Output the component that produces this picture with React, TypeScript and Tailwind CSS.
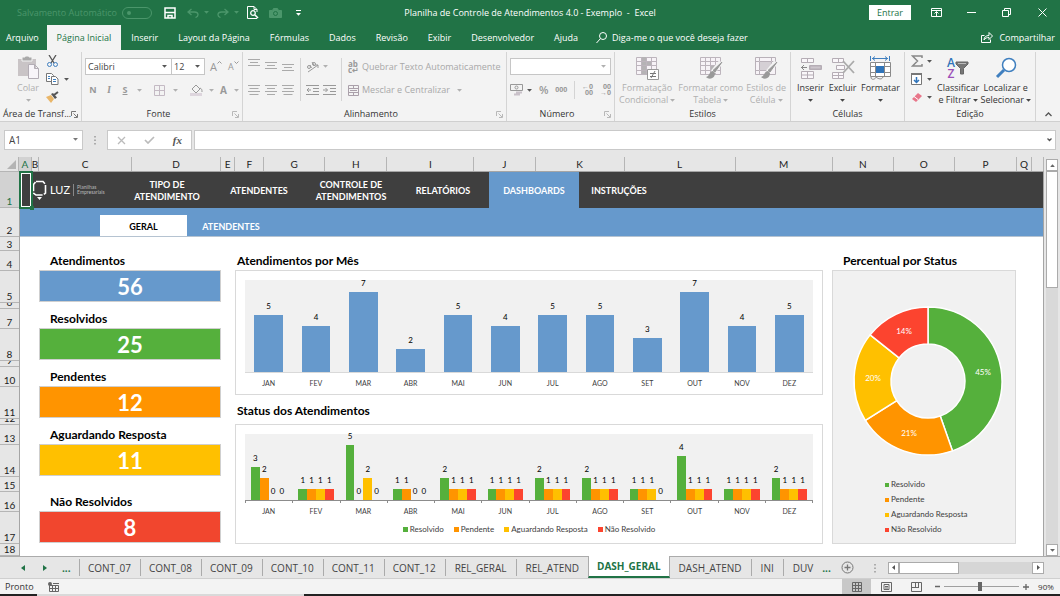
import React from 'react';
import clsx from 'clsx';


type Status = {
    name: string;
    color: string;
    fill: string;
}

const RIBBON_TABS = [ 'Arquivo', 'Página Inicial', 'Inserir', 'Layout da Página', 'Fórmulas', 'Dados', 'Revisão', 'Exibir', 'Desenvolvedor', 'Ajuda' ];
const COLUMNS = [ 'A', 'B', 'C', 'D', 'E', 'F', 'G', 'H', 'I', 'J', 'K', 'L', 'M', 'N', 'O', 'P', 'Q', '' ];
const ROW_HEIGHTS = [ 36, 29, 14, 20, 32, 6, 20, 32, 6, 20, 32, 6, 20, 32, 15, 20, 32, 12 ];
const SHEETS = [ 'CONT_07', 'CONT_08', 'CONT_09', 'CONT_10', 'CONT_11', 'CONT_12', 'REL_GERAL', 'REL_ATEND', 'DASH_GERAL', 'DASH_ATEND', 'INI', 'DUV' ];
const MONTHS = [ 'JAN', 'FEV', 'MAR', 'ABR', 'MAI', 'JUN', 'JUL', 'AGO', 'SET', 'OUT', 'NOV', 'DEZ' ];
const TOTALS = [ 5, 4, 7, 2, 5, 4, 5, 5, 3, 7, 4, 5 ];

const BY_STATUS = [
    [ 3, 2, 0, 0 ], [ 1, 1, 1, 1 ], [ 5, 0, 2, 0 ], [ 1, 1, 0, 0 ],
    [ 2, 1, 1, 1 ], [ 1, 1, 1, 1 ], [ 2, 1, 1, 1 ], [ 2, 1, 1, 1 ],
    [ 1, 1, 1, 0 ], [ 4, 1, 1, 1 ], [ 1, 1, 1, 1 ], [ 2, 1, 1, 1 ],
];

const STATUSES: Status[] = [
    { name: 'Resolvido', color: 'bg-[#55b03c]', fill: '#55b03c' },
    { name: 'Pendente', color: 'bg-[#ff9400]', fill: '#ff9400' },
    { name: 'Aguardando Resposta', color: 'bg-[#ffc000]', fill: '#ffc000' },
    { name: 'Não Resolvido', color: 'bg-[#fc442f]', fill: '#fc442f' },
];

const KPIS = [
    { label: 'Atendimentos', value: 56, color: 'bg-[#6699cc]' },
    { label: 'Resolvidos', value: 25, color: 'bg-[#55b03c]' },
    { label: 'Pendentes', value: 12, color: 'bg-[#ff9400]' },
    { label: 'Aguardando Resposta', value: 11, color: 'bg-[#ffc000]' },
    { label: 'Não Resolvidos', value: 8, color: 'bg-[#f1462e]' },
];


/* ---------- small pieces ---------- */

type IconProps = {
    w: number;
    h: number;
    className?: string;
    children: React.ReactNode;
}

function Icon({ w, h, className, children }: IconProps) {
    return <svg width={w} height={h} viewBox={`0 0 ${w} ${h}`} fill="none" stroke="currentColor" className={clsx('shrink-0', className)} aria-hidden="true">{children}</svg>;
}

function Caret({ className = 'text-[#555]' }: { className?: string }) {
    return <Icon w={5} h={3} className={className}><path d="M.5 0h4v.5L2.500 2.800.5.500z" fill="currentColor" stroke="none" /></Icon>;
}

function Divider() {
    return <span className="h-[18px] w-px shrink-0 bg-[#d4d4d4]" />;
}

function Launcher({ dim }: { dim?: boolean }) {
    return <Icon w={7} h={7} className={dim ? 'text-[#b8b8b8]' : 'text-[#777]'}><path d="M.5 5V.5H5M2.500 2.500l3.500 3.500M6.500 3v3.500H3" /></Icon>;
}

function Lines({ widths }: { widths: number[] }) {
    return <Icon w={12} h={10} className="text-[#aaa]">
        {widths.map((w, i) => <path key={i} d={`M${(12 - w) / 2} ${i * 3 + .5}h${w}`} />)}
    </Icon>;
}

function Group({ label, launcher, children }: { label: string; launcher?: 'dim' | 'dark'; children: React.ReactNode }) {
    return <section aria-label={label} className="flex min-w-0 flex-col whitespace-nowrap border-r border-[#d4d4d4]">
        <div className="flex flex-1">{children}</div>
        <div className="flex h-[14px] items-center px-[3px] text-[#333]">
            <span className={clsx('flex-1', label.endsWith('...') ? 'text-left' : 'text-center')}>{label}</span>
            {launcher && <button aria-label={`Opções de ${label}`}><Launcher dim={launcher === 'dim'} /></button>}
        </div>
    </section>;
}

function BigButton({ lines, icon, dim, caretBelow }: { lines: string[]; icon: React.ReactNode; dim?: boolean; caretBelow?: boolean }) {
    return <button className={clsx('flex flex-col items-center leading-3', dim ? 'text-[#b0b0b0]' : 'text-[#333]')}>
        <span className="flex h-[28px] items-center">{icon}</span>
        {lines.map((line, i) => <span key={line} className="flex items-center gap-[2px]">
            {line}{i === 1 && <Caret className={dim ? 'text-[#b0b0b0]' : 'text-[#444]'} />}
        </span>)}
        {caretBelow && <span className="flex h-3 items-center"><Caret className={dim ? 'text-[#b0b0b0]' : 'text-[#444]'} /></span>}
    </button>;
}

function Picker({ label, value, className, dim }: { label: string; value: string; className: string; dim?: boolean }) {
    return <label className={clsx('relative block h-[17px] border border-[#c6c6c6] bg-white', className)}>
        <select aria-label={label} defaultValue={value} className="block h-full w-full appearance-none pl-[2px] text-[#444]">
            <option>{value}</option>
        </select>
        <Caret className={clsx('pointer-events-none absolute right-1 top-[6px]', dim ? 'text-[#b0b0b0]' : 'text-[#555]')} />
    </label>;
}


/* ---------- title bar and ribbon tabs ---------- */

function TitleBar() {
    return <header className="grid h-[25px] grid-cols-[1fr_auto_1fr] items-center">
        <div className="flex items-center pl-[17px] text-[#4b966b]">
            <label className="flex items-center gap-[5px]">
                Salvamento Automático
                <input type="checkbox" disabled className="peer sr-only" />
                <Icon w={30} h={12}><rect x=".5" y=".5" width="29" height="11" rx="5.500" /><circle cx="7" cy="6" r="2" fill="currentColor" stroke="none" /></Icon>
            </label>
            <button aria-label="Salvar" className="ml-3 text-white"><Icon w={12} h={12}><path d="M1 1h10v10H1z" strokeWidth="1.500" /><path d="M1 5.500h10M4 11V8.500h4V11" strokeWidth="1.500" /></Icon></button>
            <button aria-label="Desfazer" className="ml-[11px] flex items-center gap-[5px]"><Icon w={12} h={10}><path d="M4.500 1 1 4l3.500 3M1 4h6.500c4.500 0 4.500 4.500 1 5.500" strokeWidth="1.300" /></Icon><Caret className="text-[#4b966b]" /></button>
            <button aria-label="Refazer" className="ml-2 flex items-center gap-[5px]"><Icon w={12} h={10}><path d="M7.500 1 11 4 7.500 7M11 4H4.500C0 4 0 8.500 3.500 9.500" strokeWidth="1.300" /></Icon><Caret className="text-[#4b966b]" /></button>
            <button aria-label="Visualizar impressão" className="ml-2 text-white"><Icon w={12} h={13}><path d="M10 12.500H.5V.5H7l3 3V6M7 .5v3h3" /><circle cx="6" cy="7" r="2.300" strokeWidth="1.300" /><path d="m8 9 3 3" strokeWidth="1.600" /></Icon></button>
            <button aria-label="Câmera" className="ml-[10px]"><Icon w={13} h={10}><path d="M.5 2.500h3l1-2h4l1 2h3v7H.5z" fill="currentColor" /><circle cx="6.500" cy="5.500" r="2" stroke="#217346" /></Icon></button>
            <button aria-label="Personalizar" className="ml-[14px] flex flex-col items-center gap-[2px] text-white"><span className="h-px w-[5px] bg-white" /><Caret className="text-white" /></button>
        </div>
        <h1>Planilha de Controle de Atendimentos 4.0 - Exemplo&nbsp; -&nbsp; Excel</h1>
        <div className="flex items-center justify-end">
            <button className="h-[15px] w-[42px] bg-white text-[#217346]">Entrar</button>
            <button aria-label="Opções da faixa" className="ml-5"><Icon w={11} h={9}><path d="M.5.500h10v8H.5zM.5 2.500h10M5.500 8V4M3.500 5.500l2-2 2 2" /></Icon></button>
            <button aria-label="Minimizar" className="ml-[25px]"><Icon w={9} h={9}><path d="M0 4.500h9" /></Icon></button>
            <button aria-label="Restaurar" className="ml-[26px]"><Icon w={9} h={9}><path d="M.5 2.500h6v6h-6zM2.500 2.500v-2h6v6h-2" /></Icon></button>
            <button aria-label="Fechar" className="ml-[27px] mr-[13px]"><Icon w={9} h={9}><path d="m.5.500 8 8m0-8-8 8" /></Icon></button>
        </div>
    </header>;
}

function RibbonTabs() {
    return <nav aria-label="Faixa de opções" className="flex h-[25px] items-stretch whitespace-nowrap">
        {RIBBON_TABS.map((tab) => <button
            key={tab}
            className={clsx(
                tab === 'Arquivo' ? 'pl-[6px] pr-2' : 'px-[10px]',
                tab === 'Página Inicial' && 'bg-[#f3f3f3] text-[#217346]',
            )}>{tab}</button>)}
        <button className="flex items-center gap-[5px] pl-2">
            <Icon w={11} h={12}><circle cx="7" cy="4" r="3.500" /><path d="M4.500 6.500.5 11" /></Icon>
            Diga-me o que você deseja fazer
        </button>
        <button className="ml-auto flex items-center gap-[6px] pr-[5px]">
            <Icon w={12} h={11}><path d="M3.500 3.500h-3v7h9v-3M3 8c0-3 2-4.500 5-4.500v-3L11.500 4 8 7.500v-2c-2 0-4 .5-5 2.500z" /></Icon>
            Compartilhar
        </button>
    </nav>;
}


/* ---------- ribbon ---------- */

function ClipboardGroup() {
    return <Group label="Área de Transf..." launcher="dark">
        <div className="flex pl-4 pt-[2px]">
            <BigButton dim caretBelow lines={[ 'Colar' ]} icon={<Icon w={24} h={24}>
                <path d="M2 3h18v17H2z" fill="#c9c4c6" stroke="none" /><path d="M6 1h3V0h4v1h3v4H6z" fill="#a9a9a9" stroke="#f3f3f3" />
                <path d="M12.500 8.500h6l4 4v10h-10zM18.500 8.500v4h4" fill="#f8f5f9" stroke="#b3adb5" />
            </Icon>} />
        </div>
        <div className="ml-[6px] flex flex-col">
            <button aria-label="Recortar" className="flex h-[18px] items-center"><Icon w={13} h={13}><path d="M3 0l5 8M10 0 5 8" stroke="#555" strokeWidth="1.300" /><circle cx="3.500" cy="9.500" r="2" stroke="#3f7fbf" /><circle cx="9.500" cy="9.500" r="2" stroke="#3f7fbf" /></Icon></button>
            <button aria-label="Copiar" className="flex h-[18px] items-center gap-[5px]"><Icon w={13} h={12}><path d="M.5.500h5l2 2v6h-7z" fill="#fff" stroke="#777" /><path d="M5.500 3.500h4l2.500 2.500v5.500H5.500z" fill="#fff" stroke="#777" /><path d="M2 3.500h2M2 5.500h2M7 6.500h3M7 8.500h3" stroke="#3f7fbf" /></Icon><Caret /></button>
            <button aria-label="Pincel de formatação" className="flex h-[18px] items-center"><Icon w={13} h={12}><path d="M0 6 5 4l3 4-3 4z" fill="#e9b669" stroke="none" /><path d="m5 3 4 5 2-1.500L7 2z" fill="#555" stroke="none" /><path d="m8 4 4-3" stroke="#555" strokeWidth="2" /></Icon></button>
        </div>
    </Group>;
}

function FontGroup() {
    return <Group label="Fonte" launcher="dim">
        <div className="flex flex-1 flex-col gap-[6px] pl-[3px] pt-[6px] text-[#999]">
            <div className="flex h-[17px] items-center">
                <Picker label="Fonte" value="Calibri" className="w-[87px]" />
                <Picker label="Tamanho da fonte" value="12" className="w-[33px] border-l-0" />
                <button aria-label="Aumentar fonte" className="ml-[5px] flex items-start text-[11px]">A<Icon w={5} h={3}><path d="m.5 2.500 2-2 2 2" /></Icon></button>
                <button aria-label="Diminuir fonte" className="ml-[6px] flex items-start">A<Icon w={5} h={3}><path d="m.5.500 2 2 2-2" /></Icon></button>
            </div>
            <div className="flex h-[18px] items-center">
                <button className="w-4 font-bold">N</button>
                <button className="w-4 font-serif text-[10px] font-bold italic">I</button>
                <button className="w-4 font-bold underline">S</button>
                <Caret className="ml-1 text-[#b0b0b0]" />
                <span className="ml-[6px]"><Divider /></span>
                <button aria-label="Bordas" className="ml-[6px] flex items-center gap-2"><Icon w={11} h={11} className="text-[#c4bac4]"><path d="M.5.500h10v10H.5zM5.500 0v11M0 5.500h11" /></Icon><Caret className="text-[#b0b0b0]" /></button>
                <span className="ml-[6px]"><Divider /></span>
                <button aria-label="Cor de preenchimento" className="ml-[6px] flex items-center gap-[6px]"><Icon w={13} h={12}><path d="m2 5 4-4 4 4-4 4zM10 4c2 1 2 2 2 4" /><path d="M0 10.500h12" stroke="#ddd5dd" strokeWidth="3" /></Icon><Caret className="text-[#b0b0b0]" /></button>
                <button aria-label="Cor da fonte" className="ml-[6px] flex items-center gap-[7px] text-[10px] font-bold">A<Caret className="text-[#b0b0b0]" /></button>
            </div>
        </div>
    </Group>;
}

function AlignGroup() {
    return <Group label="Alinhamento" launcher="dim">
        <div className="flex flex-col gap-[6px] pl-[5px] pt-[6px]">
            <div className="flex h-[17px] items-center gap-[5px]">
                <button aria-label="Alinhar em cima" className="pb-[6px]"><Lines widths={[ 12, 8, 12 ]} /></button>
                <button aria-label="Alinhar no meio"><Lines widths={[ 12, 8, 12 ]} /></button>
                <button aria-label="Alinhar embaixo" className="pt-[5px]"><Lines widths={[ 12, 8, 12 ]} /></button>
            </div>
            <div className="flex h-[18px] items-center gap-[5px]">
                <button aria-label="Alinhar à esquerda"><Lines widths={[ 12, 9, 12, 9 ]} /></button>
                <button aria-label="Centralizar"><Lines widths={[ 12, 8, 12, 8 ]} /></button>
                <button aria-label="Alinhar à direita"><Lines widths={[ 12, 9, 12, 9 ]} /></button>
            </div>
        </div>
        <div className="ml-[6px] mt-[6px] h-[43px] w-px bg-[#d4d4d4]" />
        <div className="flex flex-col gap-[6px] pl-[5px] pt-[6px] text-[#999]">
            <button aria-label="Orientação" className="flex h-[17px] items-center gap-1"><Icon w={13} h={12}><circle cx="3" cy="6" r="1.500" /><path d="m4 4 1.500 3M6 1l2.500 4M2 11l10-7M9 4h3v3" /><circle cx="8" cy="3" r="1.500" /></Icon><Caret className="text-[#b0b0b0]" /></button>
            <div className="flex h-[18px] items-center gap-1">
                <button aria-label="Diminuir recuo"><Icon w={13} h={10}><path d="M0 .5h13M7 3.500h6M7 6.500h6M0 9.500h13M5 5H1m2-2L1 5l2 2" /></Icon></button>
                <button aria-label="Aumentar recuo"><Icon w={13} h={10}><path d="M0 .5h13M7 3.500h6M7 6.500h6M0 9.500h13M0 5h4.500m-2-2 2 2-2 2" /></Icon></button>
            </div>
        </div>
        <div className="ml-[5px] mt-[6px] h-[43px] w-px bg-[#d4d4d4]" />
        <div className="flex flex-col gap-[6px] pl-[6px] pt-[6px] text-[#a8a8a8]">
            <button className="flex h-[17px] items-center gap-[3px]">
                <span className="flex w-[11px] flex-col items-start text-[8px] font-bold leading-[6px] text-[#999]"><span>ab</span><span>c↵</span></span>
                Quebrar Texto Automaticamente
            </button>
            <button className="flex h-[18px] items-center gap-[3px]">
                <Icon w={11} h={11} className="text-[#aaa0aa]"><path d="M.5.500h10v10H.5zM0 3.500h11M0 7.500h11M5.500 0v3M5.500 8v3M2 5.500h7" /></Icon>
                Mesclar e Centralizar
                <Caret className="ml-1 text-[#b0b0b0]" />
            </button>
        </div>
    </Group>;
}

function NumberGroup() {
    return <Group label="Número" launcher="dim">
        <div className="flex flex-1 flex-col gap-[6px] px-[3px] pt-[6px] text-[#999]">
            <Picker label="Formato de número" value="" className="w-full" dim />
            <div className="flex h-[18px] items-center justify-between">
                <button aria-label="Moeda" className="flex items-center gap-1"><Icon w={13} h={12}><path d="M.5.500h12v6H.5z" /><circle cx="6.500" cy="3.500" r="1.500" /><path d="M6 8.500h6M4 10.500h6" stroke="#c9c1c9" strokeWidth="2" /></Icon><Caret /></button>
                <button className="text-[11px] font-semibold">%</button>
                <button className="text-[7px] font-bold">000</button>
                <Divider />
                <button aria-label="Aumentar casas" className="flex flex-col items-end text-[7px] font-bold leading-[6px]"><span>←0</span><span>00</span></button>
                <button aria-label="Diminuir casas" className="flex flex-col items-end text-[7px] font-bold leading-[6px]"><span>00</span><span>→0</span></button>
            </div>
        </div>
    </Group>;
}

function Grid({ children, shade }: { children?: React.ReactNode; shade?: string }) {
    return <Icon w={24} h={24} className="text-[#bdb5bd]">
        <path d="M1.500 1.500h20v17h-20z" fill="#f7f3f7" />
        {shade && <path d={shade} fill="#b5b3b5" stroke="none" />}
        <path d="M6.500 1v17M11.500 1v17M16.500 1v17M1 5.500h20M1 9.500h20M1 14.500h20" />
        {children}
    </Icon>;
}

function Brush() {
    return <><path d="m22 6-8 10" stroke="#f3f3f3" strokeWidth="5" /><path d="m23 6-7 10-2-1.500z" fill="#999" stroke="#999" /><path d="M14 15c-4 0-3 5-7 6 3 3 9 2 9-4z" fill="#999" stroke="none" /></>;
}

function StylesGroup() {
    return <Group label="Estilos">
        <div className="flex flex-1 justify-between pl-1 pr-1 pt-[2px]">
            <BigButton dim lines={[ 'Formatação', 'Condicional' ]} icon={<Grid shade="M6 1h6v4h4v5h-5v4h4v4H6z"><path d="M12.500 13.500h11v10h-11z" fill="#fff" stroke="#999" /><path d="M15 17.500h6M15 20.500h6M20 15l-4 7" stroke="#777" /></Grid>} />
            <BigButton dim lines={[ 'Formatar como', 'Tabela' ]} icon={<Grid shade="M11 10h5v4h-5z"><Brush /></Grid>} />
            <BigButton dim lines={[ 'Estilos de', 'Célula' ]} icon={<Icon w={24} h={24} className="text-[#b9b1b9]"><path d="M1.500 1.500h20v17h-20zM5.500 5.500h12v9h-12zM5.500 1v4M17.500 1v4M1 5.500h4M1 14.500h4M5.500 15v4M18 5.500h4" fill="#f7f3f7" /><path d="M6 6h11v8H6z" fill="#d5d0d5" stroke="none" /><Brush /></Icon>} />
        </div>
    </Group>;
}

function CellsGroup() {
    return <Group label="Células">
        <div className="flex flex-1 justify-between pl-[6px] pr-1 pt-[2px]">
            <BigButton caretBelow lines={[ 'Inserir' ]} icon={<Icon w={22} h={24} className="text-[#b5adb5]"><path d="M1.500 2.500h12v4h-12zM7.500 2.500v4M9.500 9.500h12v4h-12zM15.500 9.500v4M1.500 15.500h12v7h-12zM7.500 15v8M1 19h12" fill="#faf7fa" /><path d="M10 10h11v3H10z" fill="#ccc5cc" /><path d="M1 11.500h6M4 9l-2.500 2.500L4 14" stroke="#888" /></Icon>} />
            <BigButton caretBelow lines={[ 'Excluir' ]} icon={<Icon w={24} h={24} className="text-[#b5adb5]"><path d="M1.500 2.500h11v4h-11zM7.500 2.500v4M5.500 9.500h8v4h-8zM1.500 16.500h11v6h-11zM7.500 16v7M1 19.500h11" fill="#faf7fa" /><path d="m12 5 11 12M23 5 12 17" stroke="#aaa" strokeWidth="1.800" /></Icon>} />
            <BigButton caretBelow lines={[ 'Formatar' ]} icon={<Icon w={24} h={24} className="text-[#8a8a8a]"><path d="M1.500 0v5M20.500 0v5M3 2.500h16M6 .5 3.500 2.500 6 4.500M16 .5l2.500 2-2.500 2" stroke="#3f7fbf" /><path d="M1.500 6.500h20v14h-20zM6.500 6v15M15.500 6v15M1 10.500h21M1 16.500h21" fill="#fff" /><path d="M7 10h8v7H7z" fill="#2f74ba" stroke="none" /><path d="M2 21c0 4 5 2 5 0 2 2 6 3 7 0" /></Icon>} />
        </div>
    </Group>;
}

function EditGroup() {
    return <Group label="Edição">
        <div className="flex flex-col pl-[6px]">
            <button aria-label="AutoSoma" className="flex h-[18px] items-center gap-1"><Icon w={12} h={12} className="text-[#888]"><path d="M11 3V1H1.500l5 5-5 5H11V9" strokeWidth="1.500" /></Icon><Caret /></button>
            <button aria-label="Preencher" className="flex h-[18px] items-center gap-1"><Icon w={12} h={12}><path d="M.5.500h10v11H.5z" fill="#fff" stroke="#777" /><path d="M0 1h11" stroke="#777" strokeWidth="2" /><path d="M5.500 4v6M3 7l2.500 2.500L8 7" stroke="#2f74ba" strokeWidth="1.500" /></Icon><Caret /></button>
            <button aria-label="Limpar" className="flex h-[18px] items-center gap-1"><Icon w={12} h={12}><path d="m1 8 6-6 4 3-6 6z" fill="#e8768a" stroke="none" /><path d="m3 5.500 4 3" stroke="#fff" /></Icon><Caret /></button>
        </div>
        <div className="flex flex-1 justify-between pl-[5px] pr-1 pt-[2px]">
            <BigButton lines={[ 'Classificar', 'e Filtrar' ]} icon={<span className="flex items-center"><span className="flex flex-col text-[12px] font-semibold leading-[11px]"><span className="text-[#2f74ba]">A</span><span className="text-[#9b4fb8]">Z</span></span><Icon w={14} h={14}><path d="M1 1h12v2L8.500 7.500V13h-3V7.500L1 3z" fill="#777" stroke="#666" /><path d="M3 2.500h8" stroke="#bbb" /></Icon></span>} />
            <BigButton lines={[ 'Localizar e', 'Selecionar' ]} icon={<Icon w={22} h={22} className="text-[#3f7fbf]"><circle cx="14" cy="8" r="6.500" fill="#fff" strokeWidth="1.500" /><path d="m9 13-7 7" strokeWidth="3" /></Icon>} />
        </div>
    </Group>;
}

function Ribbon() {
    return <div className="grid h-[72px] shrink-0 grid-cols-[82fr_161fr_264fr_108fr_176fr_114fr_131fr_24fr] border-b border-[#cfcfcf] bg-[#f3f3f3] pt-[2px]">
        <ClipboardGroup />
        <FontGroup />
        <AlignGroup />
        <NumberGroup />
        <StylesGroup />
        <CellsGroup />
        <EditGroup />
        <button aria-label="Recolher faixa" className="flex items-end justify-center pb-1 text-[#555]"><Icon w={7} h={5}><path d="m.5 4 3-3 3 3" strokeWidth="1.300" /></Icon></button>
    </div>;
}

function FormulaBar() {
    return <div className="flex h-[35px] shrink-0 items-start pl-[4px] pr-1 pt-2 text-[#444]">
        <label className="relative flex h-[20px] w-[79px] border border-[#c9c9c9] bg-white">
            <input aria-label="Caixa de nome" defaultValue="A1" className="w-full pl-1 text-[10px]" />
            <Caret className="absolute right-1 top-[7px] text-[#777]" />
        </label>
        <Icon w={2} h={20} className="mx-[11px] text-[#999]"><path d="M1 6v1.500M1 9.500V11M1 13v1.500" strokeWidth="1.500" /></Icon>
        <div className="flex h-[20px] w-[85px] items-center justify-around border border-[#c9c9c9] bg-white text-[#bbb]">
            <button aria-label="Cancelar"><Icon w={9} h={9}><path d="m1 1 7 7m0-7L1 8" strokeWidth="1.300" /></Icon></button>
            <button aria-label="Inserir"><Icon w={11} h={8}><path d="m1 4 3 3 6-6" strokeWidth="1.700" /></Icon></button>
            <button className="font-['Liberation_Serif',serif] text-[11px] font-bold italic text-[#555]">fx</button>
        </div>
        <label className="relative ml-[2px] flex h-[20px] flex-1 border border-[#c9c9c9] bg-white">
            <input aria-label="Barra de fórmulas" className="w-full px-1" />
            <Icon w={5} h={4} className="absolute right-[3px] top-[7px] text-[#555]"><path d="m.5.500 2 2 2-2" strokeWidth="1.300" /></Icon>
        </label>
    </div>;
}


/* ---------- worksheet ---------- */

function ColumnHeads() {
    return <div className="grid h-[15px] flex-1 grid-cols-[13fr_7fr_93fr_89fr_14fr_29fr_61fr_62fr_87fr_61fr_89fr_111fr_97fr_61fr_61fr_62fr_15fr_12fr] border-b border-[#a5a5a5]">
        {COLUMNS.map((col, i) => <span
            key={i}
            className={clsx('flex min-w-0 items-center justify-center border-r border-[#b5b5b5] text-[10px]', i === 0 ? 'bg-[#d2d2d2] text-[#217346]' : 'text-[#222]')}>{col}</span>)}
    </div>;
}

function RowHeads() {
    return <div className="w-5 shrink-0 border-r border-[#a5a5a5]">
        {ROW_HEIGHTS.map((height, i) => <div
            key={i}
            style={{ height }}
            className={clsx('flex items-end justify-center overflow-hidden border-b border-[#b5b5b5] text-[10px] leading-3', i === 0 ? 'bg-[#d2d2d2] text-[#217346]' : 'text-[#222]')}>{i + 1}</div>)}
    </div>;
}

function Logo() {
    return <div className="flex w-[101px] items-center gap-[3px] pl-3 font-normal">
        <Icon w={15} h={20}><path d="M4 1.500h7l2.500 3v8.500l-2.500 2H4L1.500 13V4.500z" strokeWidth="1.600" strokeDasharray="10 1.500" /><path d="M5 17h5l-2.500 3z" fill="currentColor" stroke="none" /></Icon>
        <span className="text-[11px]">LUZ</span>
        <span className="h-3 w-px bg-[#888]" />
        <span className="text-[5px] leading-[5px] text-[#bbb]">Planilhas<br />Empresariais</span>
    </div>;
}

function SheetNav() {
    const cell = 'flex h-full w-[92px] items-center justify-center pt-[2px] text-center';

    return <nav aria-label="Planilha" className="text-[9px] font-bold leading-3 text-white">
        <div className="relative flex h-[36px] items-center bg-[#3f3f3f]">
            <Logo />
            <a href="#tipo" className={cell}>TIPO DE<br />ATENDIMENTO</a>
            <a href="#atendentes" className={cell}>ATENDENTES</a>
            <a href="#controle" className={cell}>CONTROLE DE<br />ATENDIMENTOS</a>
            <a href="#relatorios" className={cell}>RELATÓRIOS</a>
            <a href="#dashboards" className="flex h-full w-[90px] items-center justify-center bg-[#6699cc] pt-[2px]">DASHBOARDS</a>
            <a href="#instrucoes" className="flex h-full w-[80px] items-center justify-center pt-[2px]">INSTRUÇÕES</a>
            {/* selected cell A1 */}
            <span className="absolute -left-px -top-px h-[38px] w-[14px] border-2 border-[#217346] outline outline-1 -outline-offset-3 outline-white" />
            <span className="absolute -bottom-[2px] left-[10px] size-1 bg-[#217346]" />
        </div>
        <div className="flex h-[29px] items-end border-b border-[#b5c3d1] bg-[#6699cc] pl-[80px]">
            <a href="#geral" className="flex h-[21px] w-[87px] items-center justify-center bg-white pt-[3px] text-black">GERAL</a>
            <a href="#atend" className="flex h-[21px] w-[88px] items-center justify-center pt-[3px]">ATENDENTES</a>
        </div>
    </nav>;
}

function Kpis() {
    return <div className="w-[182px] shrink-0">
        {KPIS.map(({ label, value, color }) => <div key={label} className="mb-[6px] last:mt-[15px]">
            <h2 className="h-5 pl-[11px] text-[12px] font-bold leading-[22px]">{label}</h2>
            <p className={clsx('flex h-8 items-center justify-center border border-[#cfcfcf] pt-[2px] text-[22px] font-bold text-white', color)}>{value}</p>
        </div>)}
    </div>;
}

function Months({ className }: { className: string }) {
    return <div className={clsx('grid grid-cols-12 text-center text-[7px] text-[#404040]', className)}>
        {MONTHS.map((month) => <span key={month}>{month}</span>)}
    </div>;
}

function TotalsChart() {
    return <figure className="h-[125px] border border-[#d9d9d9] px-[9px] pt-[9px]">
        <div className="grid h-[93px] grid-cols-12 border-b border-[#d9d9d9] bg-[#f1f1f1]">
            {TOTALS.map((total, i) => <div key={MONTHS[i]} className="flex h-full flex-col items-center justify-end text-[8px] leading-[10px]">
                <span className="mb-1">{total}</span>
                <div className="w-3/5 shrink-0 bg-[#6699cc]" style={{ height: `${total * 12.5}%` }} />
            </div>)}
        </div>
        <Months className="leading-5" />
    </figure>;
}

function StatusChart() {
    return <figure className="h-[120px] border border-[#d9d9d9] px-[9px] pt-[9px]">
        <div className="grid h-[67px] grid-cols-12 border-b border-[#8c8c8c] bg-[#f1f1f1]">
            {BY_STATUS.map((values, i) => <div key={MONTHS[i]} className="flex h-full px-[6px]">
                {values.map((value, s) => <div key={s} className="flex h-full flex-1 flex-col items-center justify-end text-[8px] leading-[10px]">
                    <span className="mb-1">{value}</span>
                    <div className={clsx('w-full shrink-0', STATUSES[s].color)} style={{ height: `${value * 100 / 6}%` }} />
                </div>)}
            </div>)}
        </div>
        <div className="grid h-[2px] grid-cols-12 border-l border-[#8c8c8c]">
            {MONTHS.map((month) => <span key={month} className="border-r border-[#8c8c8c]" />)}
        </div>
        <Months className="leading-4" />
        <figcaption className="flex justify-center gap-[10px] pt-1 text-[8px] leading-3 text-[#404040]">
            {STATUSES.map(({ name, color }) => <span key={name} className="flex items-center gap-[2px]"><span className={clsx('size-[5px]', color)} />{name}</span>)}
        </figcaption>
    </figure>;
}

function slice(from: number, to: number) {
    const at = (share: number, r: number) => {
        const angle = share * 2 * Math.PI;
        return `${95 + r * Math.sin(angle)} ${110 - r * Math.cos(angle)}`;
    };

    return `M${at(from, 74)}A74 74 0 0 1 ${at(to, 74)}L${at(to, 37)}A37 37 0 0 0 ${at(from, 37)}Z`;
}

function Donut() {
    const labels = [
        { text: '45%', x: 150, y: 104 },
        { text: '21%', x: 76, y: 165 },
        { text: '20%', x: 40, y: 110 },
        { text: '14%', x: 71, y: 63 },
    ];
    const cuts = [ 0, 25 / 56, 37 / 56, 48 / 56, 1 ];

    return <figure className="h-[274px] border border-[#d9d9d9] bg-[#f1f1f1]">
        <svg viewBox="0 0 182 200" className="block w-full" role="img" aria-label="Percentual por Status">
            {STATUSES.map(({ name, fill }, i) => <path key={name} d={slice(cuts[i], cuts[i + 1])} fill={fill} stroke="#fff" strokeWidth="1.500" />)}
            {labels.map(({ text, x, y }) => <text key={text} x={x} y={y} textAnchor="middle" fontSize="8" fill="#fff">{text}</text>)}
        </svg>
        <figcaption className="flex flex-col pl-[52px] pt-[6px] text-[8px] leading-[15px] text-[#404040]">
            {STATUSES.map(({ name, color }) => <span key={name} className="flex items-center gap-[2px]"><span className={clsx('size-1', color)} />{name}</span>)}
        </figcaption>
    </figure>;
}

function Worksheet() {
    return <div className="flex min-h-0 flex-1">
        <div className="flex min-w-0 flex-1 flex-col font-['Lato','Liberation_Sans',sans-serif]">
            <div className="flex shrink-0">
                <span className="flex h-[15px] w-[19px] items-end justify-end border-b border-r border-[#b5b5b5] p-[2px]"><Icon w={9} h={9}><path d="M9 0v9H0z" fill="#b4b4b4" stroke="none" /></Icon></span>
                <ColumnHeads />
            </div>
            <div className="flex min-h-0 flex-1">
                <RowHeads />
                <main className="min-w-0 flex-1 border-r border-[#a5a5a5] bg-white text-black">
                    <SheetNav />
                    <div className="flex pl-[19px] pr-[27px] pt-[13px]">
                        <Kpis />
                        <div className="ml-[14px] min-w-0 flex-1">
                            <h2 className="h-5 pl-[2px] text-[12px] font-bold leading-[22px]">Atendimentos por Mês</h2>
                            <TotalsChart />
                            <h2 className="h-[29px] pl-[2px] text-[12px] font-bold leading-8">Status dos Atendimentos</h2>
                            <StatusChart />
                        </div>
                        <div className="ml-[9px] w-[184px] shrink-0">
                            <h2 className="h-5 pl-[11px] text-[12px] font-bold leading-[22px]">Percentual por Status</h2>
                            <Donut />
                        </div>
                    </div>
                </main>
            </div>
        </div>
        <div className="flex w-4 flex-col bg-[#e6e6e6] pl-[2px] pr-[2px] pt-[2px]">
            <button aria-label="Rolar para cima" className="flex h-3 items-center justify-center border border-[#ababab] bg-white"><Caret className="rotate-180 text-[#666]" /></button>
            <div className="flex-1 bg-[#d9d9d9]"><div className="h-[117px] border border-[#ababab] bg-white" /></div>
            <button aria-label="Rolar para baixo" className="flex h-3 items-center justify-center border border-[#ababab] bg-white"><Caret className="text-[#666]" /></button>
        </div>
    </div>;
}


/* ---------- sheet tabs and status bar ---------- */

function SheetTabs() {
    return <div className="flex h-[22px] shrink-0 items-stretch border-t border-[#ababab] pr-4 text-[10px] text-[#444]">
        <div className="flex w-[79px] items-center pl-[21px] text-[#217346]">
            <button aria-label="Planilha anterior"><Icon w={4} h={6}><path d="M4 0v6L0 3z" fill="currentColor" stroke="none" /></Icon></button>
            <button aria-label="Próxima planilha" className="ml-[18px]"><Icon w={4} h={6}><path d="M0 0v6l4-3z" fill="currentColor" stroke="none" /></Icon></button>
            <button className="ml-[15px] font-bold">...</button>
        </div>
        {SHEETS.map((sheet) => sheet === 'DASH_GERAL'
            ? <button key={sheet} className="-mt-px border-x border-b-2 border-x-[#ababab] border-b-[#217346] bg-white px-2 font-bold text-[#217346]">{sheet}</button>
            : <button key={sheet} className={clsx('my-[2px] pr-[9px]', sheet.startsWith('CONT') ? 'pl-2' : 'pl-[9px]', sheet === 'DASH_ATEND' ? 'pr-3' : 'border-l border-[#ababab]')}>{sheet}</button>)}
        <button className="font-bold text-[#217346]">...</button>
        <button aria-label="Nova planilha" className="ml-[10px] text-[#777]"><Icon w={13} h={13}><circle cx="6.500" cy="6.500" r="5.500" /><path d="M3.500 6.500h6M6.500 3.500v6" strokeWidth="1.300" /></Icon></button>
        <div className="ml-auto flex w-[170px] items-center">
            <Icon w={2} h={10} className="mr-3 text-[#999]"><path d="M1 1v1.500M1 4.500V6M1 8v1.500" strokeWidth="1.500" /></Icon>
            <button aria-label="Rolar para a esquerda" className="flex h-3 w-[11px] items-center justify-center border border-[#ababab] bg-white text-[#555]"><Icon w={3} h={5}><path d="M3 0v5L0 2.500z" fill="currentColor" stroke="none" /></Icon></button>
            <div className="h-3 flex-1 bg-[#d6d6d6]"><div className="h-3 w-[60px] border border-[#ababab] bg-white" /></div>
            <button aria-label="Rolar para a direita" className="flex h-3 w-3 items-center justify-center border border-[#ababab] bg-white text-[#555]"><Icon w={3} h={5}><path d="M0 0v5l3-2.500z" fill="currentColor" stroke="none" /></Icon></button>
        </div>
    </div>;
}

function StatusBar() {
    return <footer className="flex h-4 shrink-0 items-center border-t border-[#cfcfcf] bg-[#f3f3f3] pl-[5px] pr-[5px] text-[#333]">
        Pronto
        <button aria-label="Gravar macro" className="ml-[14px] text-[#666]"><Icon w={11} h={10}><path d="M1.500 3.500h9v6h-9zM2 6.500h8M4.500 4v6M7.500 4v6M5 1.500h6" /><circle cx="2" cy="2" r="2" fill="currentColor" stroke="none" /></Icon></button>
        <div className="ml-auto flex h-full items-center text-[#666]">
            <button aria-label="Normal" className="flex h-full w-[29px] items-center justify-center bg-[#c8c8c8]"><Icon w={10} h={10}><path d="M.5.500h9v9h-9zM0 3.500h10M0 6.500h10M3.500 0v10M6.500 0v10" /></Icon></button>
            <button aria-label="Layout da página" className="flex h-full w-[30px] items-center justify-center"><Icon w={11} h={10}><path d="M.5.500h10v9H.5zM3 2.500h5v5H3zM4 4.500h3M4 6h3" /></Icon></button>
            <button aria-label="Quebra de página" className="flex h-full w-[30px] items-center justify-center"><Icon w={11} h={10}><path d="M.5.500h10v9H.5zM4.500 0v5.500M7.500 0v5.500M0 5.500h8" /></Icon></button>
            <button aria-label="Reduzir zoom" className="ml-1"><Icon w={5} h={5}><path d="M0 2.500h5" strokeWidth="1.500" /></Icon></button>
            <input type="range" aria-label="Zoom" min={10} max={190} defaultValue={95} className="mx-1 h-2 w-[75px] appearance-none bg-transparent [&::-webkit-slider-runnable-track]:h-px [&::-webkit-slider-runnable-track]:bg-[#a0a0a0] [&::-webkit-slider-thumb]:-mt-1 [&::-webkit-slider-thumb]:h-[9px] [&::-webkit-slider-thumb]:w-1 [&::-webkit-slider-thumb]:appearance-none [&::-webkit-slider-thumb]:bg-[#666]" />
            <button aria-label="Ampliar zoom"><Icon w={6} h={6}><path d="M0 3h6M3 0v6" strokeWidth="1.300" /></Icon></button>
            <button className="ml-2 w-[18px] text-[8px] text-[#333]">90%</button>
        </div>
    </footer>;
}

export default function App() {
    return <div className="flex h-screen min-h-[596px] flex-col overflow-hidden bg-[#e6e6e6] font-['Open_Sans','Noto_Sans',sans-serif] text-[9px] leading-3">
        <div className="shrink-0 bg-[#217346] text-white">
            <TitleBar />
            <RibbonTabs />
        </div>
        <Ribbon />
        <FormulaBar />
        <Worksheet />
        <SheetTabs />
        <StatusBar />
        <div className="flex h-[2px] shrink-0 bg-[#222]"><span className="ml-[37px] w-[267px] bg-[#d9d9d9]" /></div>
    </div>;
}
